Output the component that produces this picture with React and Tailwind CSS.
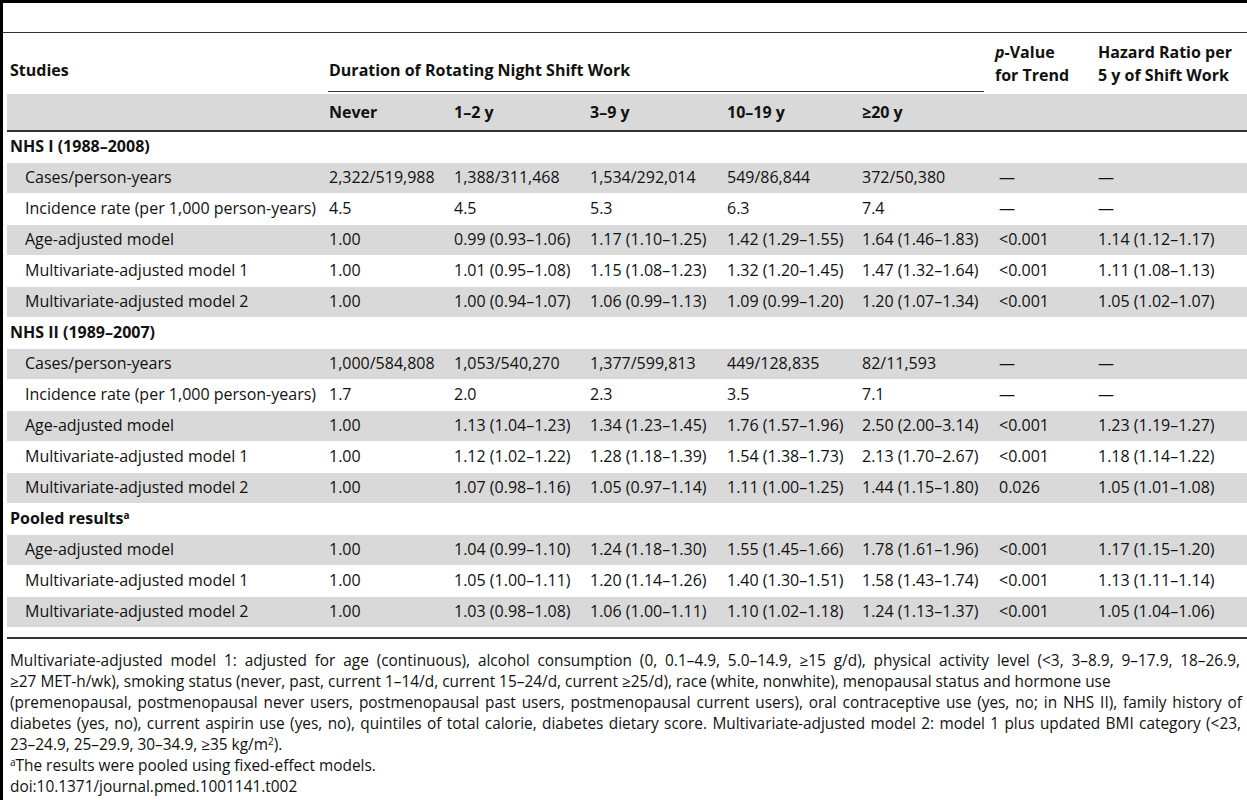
const groups = [
  {
    title: "NHS I (1988–2008)",
    rows: [
      ["Cases/person-years", "2,322/519,988", "1,388/311,468", "1,534/292,014", "549/86,844", "372/50,380", "—", "—"],
      ["Incidence rate (per 1,000 person-years)", "4.5", "4.5", "5.3", "6.3", "7.4", "—", "—"],
      ["Age-adjusted model", "1.00", "0.99 (0.93–1.06)", "1.17 (1.10–1.25)", "1.42 (1.29–1.55)", "1.64 (1.46–1.83)", "<0.001", "1.14 (1.12–1.17)"],
      ["Multivariate-adjusted model 1", "1.00", "1.01 (0.95–1.08)", "1.15 (1.08–1.23)", "1.32 (1.20–1.45)", "1.47 (1.32–1.64)", "<0.001", "1.11 (1.08–1.13)"],
      ["Multivariate-adjusted model 2", "1.00", "1.00 (0.94–1.07)", "1.06 (0.99–1.13)", "1.09 (0.99–1.20)", "1.20 (1.07–1.34)", "<0.001", "1.05 (1.02–1.07)"],
    ],
  },
  {
    title: "NHS II (1989–2007)",
    rows: [
      ["Cases/person-years", "1,000/584,808", "1,053/540,270", "1,377/599,813", "449/128,835", "82/11,593", "—", "—"],
      ["Incidence rate (per 1,000 person-years)", "1.7", "2.0", "2.3", "3.5", "7.1", "—", "—"],
      ["Age-adjusted model", "1.00", "1.13 (1.04–1.23)", "1.34 (1.23–1.45)", "1.76 (1.57–1.96)", "2.50 (2.00–3.14)", "<0.001", "1.23 (1.19–1.27)"],
      ["Multivariate-adjusted model 1", "1.00", "1.12 (1.02–1.22)", "1.28 (1.18–1.39)", "1.54 (1.38–1.73)", "2.13 (1.70–2.67)", "<0.001", "1.18 (1.14–1.22)"],
      ["Multivariate-adjusted model 2", "1.00", "1.07 (0.98–1.16)", "1.05 (0.97–1.14)", "1.11 (1.00–1.25)", "1.44 (1.15–1.80)", "0.026", "1.05 (1.01–1.08)"],
    ],
  },
  {
    title: "Pooled results",
    sup: "a",
    rows: [
      ["Age-adjusted model", "1.00", "1.04 (0.99–1.10)", "1.24 (1.18–1.30)", "1.55 (1.45–1.66)", "1.78 (1.61–1.96)", "<0.001", "1.17 (1.15–1.20)"],
      ["Multivariate-adjusted model 1", "1.00", "1.05 (1.00–1.11)", "1.20 (1.14–1.26)", "1.40 (1.30–1.51)", "1.58 (1.43–1.74)", "<0.001", "1.13 (1.11–1.14)"],
      ["Multivariate-adjusted model 2", "1.00", "1.03 (0.98–1.08)", "1.06 (1.00–1.11)", "1.10 (1.02–1.18)", "1.24 (1.13–1.37)", "<0.001", "1.05 (1.04–1.06)"],
    ],
  },
];

function DataRow({ cells, grey }) {
  const bg = grey ? "bg-[#d9d9d9]" : "bg-white";
  return (
    <tr className="h-[31px]">
      {cells.map((c, i) => (
        <td
          key={i}
          className={`${bg} border-t border-white p-0 whitespace-nowrap align-middle ${i === 0 ? "pl-[18px]" : "pl-[7px]"}`}
        >
          {c}
        </td>
      ))}
    </tr>
  );
}

export default function App() {
  return (
    <div
      className="w-[1247px] h-[800px] bg-white text-[#111] text-[16px] leading-[21px] border-l-[3px] border-black"
      style={{ fontFamily: '"Open Sans", "Noto Sans", sans-serif' }}
    >
      <div className="h-[34px] border-t-[3px] border-black">
        <div className="h-[30px] border-b border-[#333]" />
      </div>

      <table className="ml-[4px] w-[1240px] table-fixed border-collapse">
        <colgroup>
          <col className="w-[315px]" />
          <col className="w-[125px]" />
          <col className="w-[136px]" />
          <col className="w-[137px]" />
          <col className="w-[135px]" />
          <col className="w-[137px]" />
          <col className="w-[99px]" />
          <col />
        </colgroup>
        <thead>
          <tr className="h-[59px]">
            <th className="p-0 pl-[3px] pb-[10px] text-left align-bottom font-bold leading-[23px]">Studies</th>
            <th colSpan={5} className="p-0 align-bottom text-left font-bold leading-[23px]">
              <div className="ml-[6px] mr-[8px] pl-[1px] pb-[9px] border-b border-[#333]">
                Duration of Rotating Night Shift Work
              </div>
            </th>
            <th className="p-0 pl-[3px] pb-[5px] text-left align-bottom font-bold leading-[23px] whitespace-nowrap">
              <i className="font-bold">p</i>-Value
              <br />
              for Trend
            </th>
            <th className="p-0 pl-[7px] pb-[5px] text-left align-bottom font-bold leading-[23px] whitespace-nowrap">
              Hazard Ratio per
              <br />5 y of Shift Work
            </th>
          </tr>
          <tr className="h-[38px]">
            {["", "Never", "1–2 y", "3–9 y", "10–19 y", "≥20 y", "", ""].map((h, i) => (
              <th
                key={i}
                className={`p-0 bg-[#d9d9d9] border-t-[2px] border-t-white border-b-2 border-b-[#333] text-left font-bold ${i === 0 ? "pl-[3px]" : "pl-[7px]"}`}
              >
                {h}
              </th>
            ))}
          </tr>
        </thead>
        <tbody>
          {groups.map((g) => (
            <Group key={g.title} g={g} />
          ))}
        </tbody>
      </table>

      <div className="mt-[10px] ml-[4px] border-t-2 border-[#333] pt-[11px] pl-[3px] text-[15.4px] whitespace-nowrap">
        <div className="w-[1230px] text-justify [text-align-last:justify]">
          Multivariate-adjusted model 1: adjusted for age (continuous), alcohol consumption (0, 0.1–4.9, 5.0–14.9, ≥15 g/d), physical activity level (&lt;3, 3–8.9, 9–17.9, 18–26.9,
        </div>
        <div>
          ≥27 MET-h/wk), smoking status (never, past, current 1–14/d, current 15–24/d, current ≥25/d), race (white, nonwhite), menopausal status and hormone use
        </div>
        <div className="w-[1232px] text-justify [text-align-last:justify]">
          (premenopausal, postmenopausal never users, postmenopausal past users, postmenopausal current users), oral contraceptive use (yes, no; in NHS II), family history of
        </div>
        <div className="w-[1231px] text-justify [text-align-last:justify]">
          diabetes (yes, no), current aspirin use (yes, no), quintiles of total calorie, diabetes dietary score. Multivariate-adjusted model 2: model 1 plus updated BMI category (&lt;23,
        </div>
        <div>
          23–24.9, 25–29.9, 30–34.9, ≥35 kg/m<sup className="text-[10px]">2</sup>).
        </div>
        <div>
          <sup className="text-[10px]">a</sup>The results were pooled using fixed-effect models.
        </div>
        <div>doi:10.1371/journal.pmed.1001141.t002</div>
      </div>
    </div>
  );
}

function Group({ g }) {
  return (
    <>
      <tr className="h-[31px]">
        <td colSpan={8} className="p-0 pl-[3px] font-bold align-middle">
          {g.title}
          {g.sup && <sup className="text-[10px]">{g.sup}</sup>}
        </td>
      </tr>
      {g.rows.map((r, i) => (
        <DataRow key={i} cells={r} grey={i % 2 === 0} />
      ))}
    </>
  );
}
